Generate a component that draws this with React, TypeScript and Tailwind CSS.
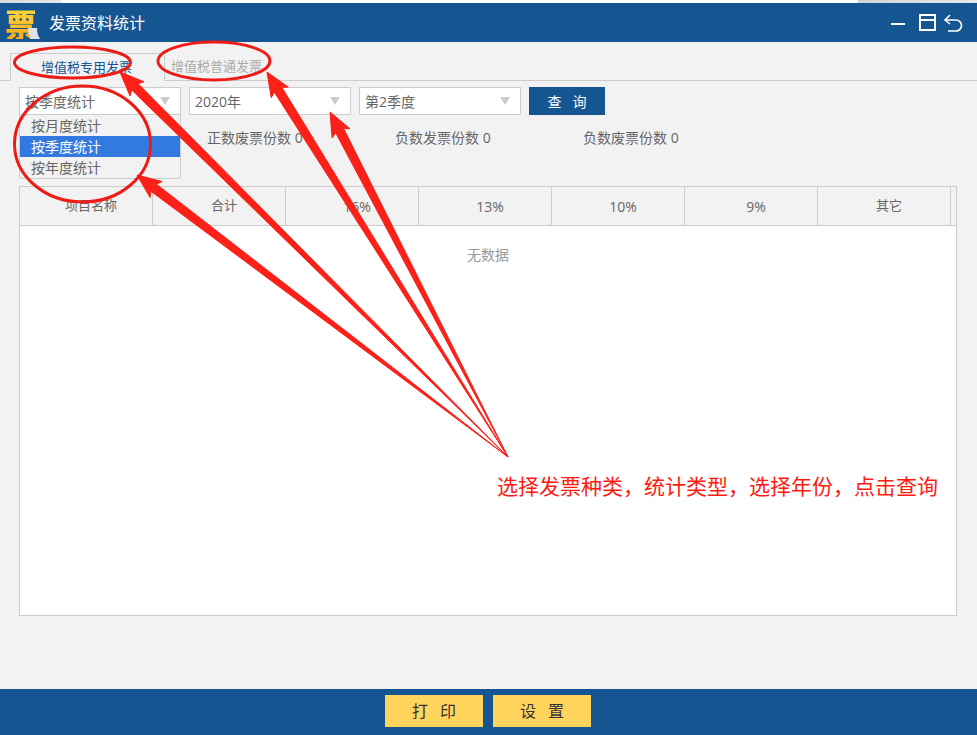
import type { ReactNode } from "react";

const FONT = "font-['Open_Sans','Noto_Sans_CJK_SC',sans-serif]";

const COLUMNS = ["项目名称", "合计", "16%", "13%", "10%", "9%", "其它"];
const PERIOD_OPTIONS = ["按月度统计", "按季度统计", "按年度统计"];
const STATS = ["正数废票份数 0", "负数发票份数 0", "负数废票份数 0"];

// tail point shared by all the hand-drawn annotation arrows
const TAIL = { x: 508, y: 457 };
const ARROW_TIPS = [
  { x: 120, y: 72 },
  { x: 137, y: 175 },
  { x: 267, y: 72 },
  { x: 330, y: 112 },
];

function arrowPoints(tip: { x: number; y: number }) {
  const dx = TAIL.x - tip.x;
  const dy = TAIL.y - tip.y;
  const len = Math.hypot(dx, dy);
  const ux = dx / len;
  const uy = dy / len;
  const nx = -uy;
  const ny = ux;
  const at = (along: number, side: number) =>
    `${tip.x + ux * along + nx * side},${tip.y + uy * along + ny * side}`;
  return [
    at(0, 0),
    at(24, 10),
    at(21, 4.5),
    `${TAIL.x},${TAIL.y}`,
    at(21, -4.5),
    at(24, -10),
  ].join(" ");
}

function Select({ label, width }: { label: string; width: string }) {
  return (
    <div
      className={`${width} h-7 bg-white border border-[#cccccc] flex items-center justify-between pl-[5px] pr-[10px] text-[14px] text-[#666666]`}
    >
      <span>{label}</span>
      <span className="w-0 h-0 border-l-[5px] border-r-[5px] border-t-[8px] border-l-transparent border-r-transparent border-t-[#cccccc]" />
    </div>
  );
}

function FooterButton({ children }: { children: ReactNode }) {
  return (
    <button
      type="button"
      className="w-[98px] h-8 bg-[#ffd45c] text-[16px] text-[#333333] tracking-[12px] indent-[12px] flex items-center justify-center"
    >
      {children}
    </button>
  );
}

function Logo() {
  return (
    <div className="relative w-[32px] h-[32px] flex items-center justify-center">
      <span className="text-[32px] leading-[32px] font-black text-transparent bg-clip-text bg-gradient-to-b from-[#ffd83f] to-[#f7a81c] font-['Noto_Sans_CJK_SC',sans-serif]">
        票
      </span>
      <svg className="absolute left-[20px] top-[20px]" width="16" height="14" viewBox="0 0 16 14">
        <path d="M3 1h9c0 4 1 8 3 11H6C4 9 3 5 3 1z" fill="#dfe3e6" />
      </svg>
    </div>
  );
}

function WindowIcons() {
  return (
    <div className="flex items-center text-white">
      <svg className="mr-[13px]" width="16" height="16" viewBox="0 0 16 16" fill="none" stroke="currentColor" strokeWidth="2">
        <path d="M1 9h14" />
      </svg>
      <svg className="mr-[7px]" width="17" height="17" viewBox="0 0 17 17" fill="none" stroke="currentColor" strokeWidth="2">
        <rect x="1" y="1" width="15" height="15" />
        <path d="M1 6h15" />
      </svg>
      <svg width="20" height="18" viewBox="0 0 20 18" fill="none" stroke="currentColor" strokeWidth="1.6">
        <path d="M7 1 2 6l5 4" />
        <path d="M2 6h11a5 5 0 0 1 0 11H5" />
      </svg>
    </div>
  );
}

function Annotations() {
  return (
    <>
      <svg className="absolute inset-0 pointer-events-none" width="977" height="735" viewBox="0 0 977 735">
        {ARROW_TIPS.map((tip) => (
          <polygon key={tip.x} points={arrowPoints(tip)} fill="#fb2018" stroke="#fb2018" strokeWidth="1" />
        ))}
        <g fill="none" stroke="#ee1c16" strokeWidth="3">
          <ellipse cx="72.5" cy="62.5" rx="58" ry="15.5" />
          <ellipse cx="214" cy="61" rx="56" ry="19" />
          <ellipse cx="82.5" cy="144" rx="68" ry="58" />
        </g>
      </svg>
      <span className="absolute left-[497px] top-[471px] text-[21px] leading-[30px] text-[#ff1a0f] whitespace-nowrap">
        选择发票种类，统计类型，选择年份，点击查询
      </span>
    </>
  );
}

export default function App() {
  return (
    <div className={`${FONT} relative w-[977px] h-[735px] overflow-hidden bg-[#f2f2f2] flex flex-col`}>
      <div className="h-[3px] flex bg-white">
        <div className="w-[62px] bg-gradient-to-r from-[#d9d9d9] to-[#e8e8e8]" />
        <div className="flex-1" />
        <div className="w-[119px] bg-gradient-to-r from-[#d4d4d4] to-[#e8e8e8]" />
      </div>

      <header className="h-[39px] bg-[#155692] flex items-center justify-between pl-[5px] pr-[14px]">
        <div className="flex items-center gap-[12px]">
          <Logo />
          <h1 className="text-[16px] text-white">发票资料统计</h1>
        </div>
        <WindowIcons />
      </header>

      <div className="h-[39px] pt-[11px] pl-[10px] flex border-b border-[#cccccc]">
        <div className="w-[155px] h-[28px] pr-[2px] bg-[#f2f2f2] border border-b-0 border-[#cccccc] text-[13px] text-[#155692] flex items-center justify-center">
          增值税专用发票
        </div>
        <div className="pl-[6px] h-[27px] text-[13px] text-[#aaaaaa] flex items-center">增值税普通发票</div>
      </div>

      <div className="relative flex items-center gap-2 pl-[19px] pt-[6px]">
        <Select label="按季度统计" width="w-[162px]" />
        <Select label="2020年" width="w-[162px]" />
        <Select label="第2季度" width="w-[162px]" />
        <button
          type="button"
          className="w-[76px] h-7 bg-[#155692] text-white text-[14px] tracking-[11px] indent-[11px]"
        >
          查询
        </button>

        <div className="absolute left-[19px] top-[34px] w-[162px] h-[64px] bg-[#f2f2f2] border border-t-0 border-[#cccccc] rounded-b-sm text-[14px] text-[#666666]">
          {PERIOD_OPTIONS.map((option) => (
            <div
              key={option}
              className={
                option === "按季度统计"
                  ? "h-[21px] pl-[11px] flex items-center bg-[#337ae0] text-white"
                  : "h-[21px] pl-[11px] flex items-center"
              }
            >
              {option}
            </div>
          ))}
        </div>
      </div>

      <div className="h-[71px] flex pl-[207px] pt-[14px] text-[14px] leading-[18px] text-[#666666]">
        {STATS.map((stat) => (
          <div key={stat} className="w-[188px]">
            {stat}
          </div>
        ))}
      </div>

      <div className="ml-[19px] mr-[20px] h-[430px] bg-white border border-[#cccccc]">
        <div className="h-[39px] bg-[#f2f2f2] border-b border-[#cccccc] flex text-[#666666]">
          {COLUMNS.map((column) => (
            <div
              key={column}
              className={
                column.includes("%")
                  ? "w-[133px] pl-[10px] text-[14px] border-r border-[#cccccc] flex items-center justify-center"
                  : "w-[133px] pl-[10px] text-[13px] border-r border-[#cccccc] flex items-center justify-center"
              }
            >
              {column}
            </div>
          ))}
        </div>
        <div className="pt-[19px] text-center text-[14px] leading-[20px] text-[#999999]">无数据</div>
      </div>

      <footer className="mt-auto h-[46px] bg-[#155692] flex items-center justify-center gap-[10px] pb-[2px] pr-px">
        <FooterButton>打印</FooterButton>
        <FooterButton>设置</FooterButton>
      </footer>

      <Annotations />
    </div>
  );
}
